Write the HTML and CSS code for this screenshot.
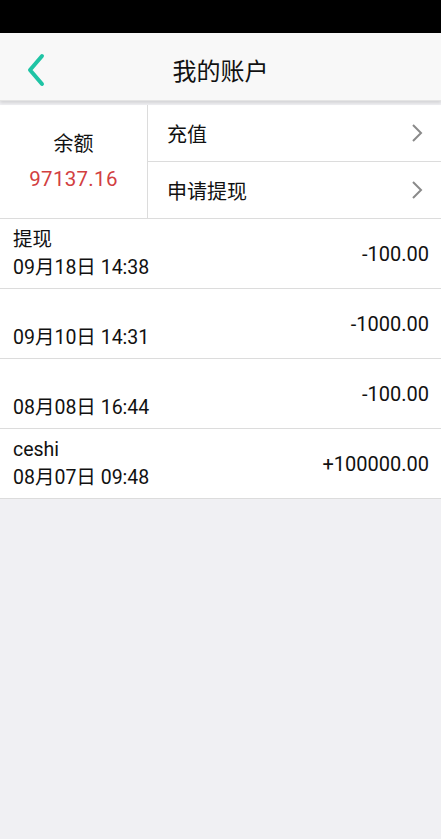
FILE: index.html
```html
<!DOCTYPE html>
<html lang="zh">
<head>
<meta charset="utf-8">
<title>我的账户</title>
<link rel="stylesheet" href="styles.css">
</head>
<body>
<div class="statusbar"></div>
<header class="topbar">
  <a class="back" href="#"><svg width="20" height="34" viewBox="0 0 20 34"><path d="M16 3 L4 17 L16 31" fill="none" stroke="#1fc4a5" stroke-width="4" stroke-linecap="round" stroke-linejoin="round"/></svg></a>
  <h1 class="title">我的账户</h1>
</header>
<section class="account">
  <div class="balance">
    <div class="balance-label">余额</div>
    <div class="balance-value">97137.16</div>
  </div>
  <div class="actions">
    <a class="action" href="#"><span>充值</span><svg class="chev" width="12" height="20" viewBox="0 0 12 20"><path d="M2 2 L10 10 L2 18" fill="none" stroke="#8a8a8a" stroke-width="2"/></svg></a>
    <a class="action" href="#"><span>申请提现</span><svg class="chev" width="12" height="20" viewBox="0 0 12 20"><path d="M2 2 L10 10 L2 18" fill="none" stroke="#8a8a8a" stroke-width="2"/></svg></a>
  </div>
</section>
<ul class="records">
  <li class="record"><div class="info"><div class="name">提现</div><div class="date">09月18日 14:38</div></div><div class="amount">-100.00</div></li>
  <li class="record"><div class="info"><div class="name"></div><div class="date">09月10日 14:31</div></div><div class="amount">-1000.00</div></li>
  <li class="record"><div class="info"><div class="name"></div><div class="date">08月08日 16:44</div></div><div class="amount">-100.00</div></li>
  <li class="record"><div class="info"><div class="name">ceshi</div><div class="date">08月07日 09:48</div></div><div class="amount">+100000.00</div></li>
</ul>
</body>
</html>
```
FILE: styles.css
```css
html, body {
  margin: 0;
  padding: 0;
  background: #f0f0f3;
  font-family: Roboto, "Noto Sans CJK SC", sans-serif;
  color: #111;
}
.statusbar {
  height: 33px;
  background: #000;
}
.topbar {
  height: 67px;
  background: #f8f8f8;
  display: flex;
  align-items: center;
  justify-content: center;
  position: relative;
  box-shadow: 0 2px 3px rgba(0,0,0,0.12);
  border-bottom: 1px solid #e4e4e4;
  z-index: 1;
}
.back {
  position: absolute;
  left: 26px;
  top: 20px;
  display: block;
  height: 34px;
}
.title {
  margin: 0;
  font-size: 24px;
  font-weight: normal;
  color: #111;
  margin-top: 5px;
}
.account {
  margin-top: 4px;
  display: flex;
  background: #fff;
  border-bottom: 1px solid #dcdcdc;
}
.balance {
  width: 147px;
  border-right: 1px solid #dcdcdc;
  display: flex;
  flex-direction: column;
  align-items: center;
  justify-content: center;
  padding-top: 4px;
}
.balance-label {
  font-size: 20px;
  line-height: 30px;
}
.balance-value {
  font-size: 20.5px;
  line-height: 40px;
  color: #d2403f;
  letter-spacing: 0.3px;
}
.actions {
  flex: 1;
  display: flex;
  flex-direction: column;
}
.action {
  height: 56px;
  display: flex;
  align-items: center;
  justify-content: space-between;
  padding: 0 18px 0 19px;
  font-size: 20px;
  color: #111;
  text-decoration: none;
}
.action + .action {
  border-top: 1px solid #dcdcdc;
}
.records {
  list-style: none;
  margin: 0;
  padding: 0;
  background: #fff;
}
.record {
  display: flex;
  align-items: center;
  justify-content: space-between;
  padding: 7px 12px 6px 13px;
  border-bottom: 1px solid #dcdcdc;
  font-size: 19.5px;
}
.name, .date {
  height: 28px;
  line-height: 28px;
}
.amount {
  font-size: 20px;
}
```
